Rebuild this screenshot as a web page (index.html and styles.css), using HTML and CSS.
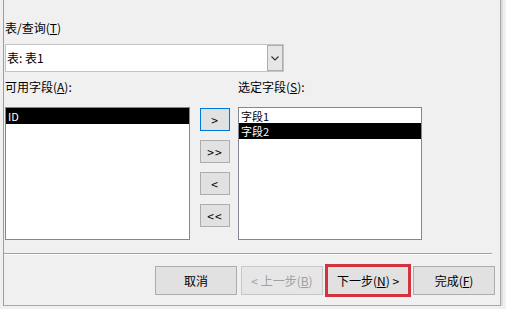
FILE: index.html
```html
<!DOCTYPE html>
<html lang="zh-CN">
<head>
<meta charset="utf-8">
<title>简单查询向导</title>
<link rel="stylesheet" href="styles.css">
</head>
<body>
<div class="dialog">
  <div class="body">
    <div class="label">表/查询(<u>T</u>)</div>
    <div class="combo">
      <span class="combo-text">表: 表1</span>
      <span class="combo-btn"><svg width="8" height="5" viewBox="0 0 8 5"><path d="M0.5 0.5 L4 4 L7.5 0.5" fill="none" stroke="#333" stroke-width="1.2"/></svg></span>
    </div>
    <div class="fields">
      <div class="col col-left">
        <div class="label">可用字段(<u>A</u>):</div>
        <div class="list list-left">
          <div class="row sel">ID</div>
        </div>
      </div>
      <div class="arrows">
        <button class="btn mini default">&gt;</button>
        <button class="btn mini">&gt;&gt;</button>
        <button class="btn mini">&lt;</button>
        <button class="btn mini">&lt;&lt;</button>
      </div>
      <div class="col col-right">
        <div class="label">选定字段(<u>S</u>):</div>
        <div class="list list-right">
          <div class="row">字段1</div>
          <div class="row sel">字段2</div>
        </div>
      </div>
    </div>
  </div>
  <div class="sep"></div>
  <div class="footer">
    <button class="btn big">取消</button>
    <button class="btn big disabled">&lt; 上一步(<u>B</u>)</button>
    <button class="btn big marked">下一步(<u>N</u>) &gt;</button>
    <button class="btn big">完成(<u>F</u>)</button>
  </div>
</div>
</body>
</html>
```

FILE: styles.css
```css
* { box-sizing: border-box; }
html, body {
  margin: 0;
  padding: 0;
  background: #f0f0f0;
}
body {
  width: 506px;
  height: 309px;
  overflow: hidden;
  font-family: "Noto Sans CJK SC", "Noto Sans", sans-serif;
  font-size: 12px;
  color: #000;
}
.dialog {
  margin-left: 3px;
  width: 498px;
  height: 306px;
  border-left: 1px solid #9c9c9c;
  border-right: 1px solid #a8a8a8;
  border-bottom: 1px solid #a8a8a8;
  box-shadow: 2px 0 0 #dcdcdc;
  display: flex;
  flex-direction: column;
}
.body {
  padding: 20px 0 0 1px;
}
.label {
  height: 16px;
  line-height: 16px;
  white-space: nowrap;
}
u { text-decoration: underline; text-underline-offset: 1px; }
.combo {
  margin-top: 8px;
  width: 279px;
  height: 28px;
  background: #fff;
  border: 1px solid #c4c4c4;
  display: flex;
  align-items: center;
  justify-content: space-between;
}
.combo-text {
  padding-left: 1px;
  line-height: 16px;
}
.combo-btn {
  width: 16px;
  height: 26px;
  background: #e6e6e6;
  border: 1px solid #adadad;
  display: flex;
  align-items: center;
  justify-content: center;
}
.fields {
  margin-top: 7px;
  display: flex;
}
.col {
  display: flex;
  flex-direction: column;
}
.col-left { width: 185px; }
.col-right { width: 184px; margin-left: 8px; }
.list {
  margin-top: 12px;
  height: 133px;
  background: #fff;
  border: 1px solid #828790;
}
.row {
  height: 16px;
  line-height: 16px;
  font-size: 11px;
  padding-left: 2px;
  white-space: nowrap;
}
.row.sel {
  background: #000;
  color: #fff;
}
.list-right .row.sel {
  margin-top: -1px;
}
.arrows {
  margin-left: 10px;
  padding-top: 29px;
  width: 30px;
  display: flex;
  flex-direction: column;
  gap: 9px;
}
.btn {
  font-family: inherit;
  font-size: 12px;
  color: #000;
  background: #e1e1e1;
  border: 1px solid #adadad;
  padding: 0;
  margin: 0;
  line-height: 16px;
  white-space: nowrap;
}
.btn.mini {
  width: 30px;
  height: 23px;
  letter-spacing: 1px;
}
.btn.mini.default {
  border: 1px solid #0078d7;
  box-shadow: inset 0 0 0 1px #cce4f7;
}
.sep {
  margin: 13px 8px 0 0;
  height: 2px;
  border-top: 1px solid #a0a0a0;
  border-bottom: 1px solid #fff;
}
.footer {
  padding: 11px 5px 0 0;
  display: flex;
  justify-content: flex-end;
  gap: 4px;
}
.btn.big {
  width: 82px;
  height: 29px;
}
.btn.disabled {
  color: #a0a0a0;
  border-color: #c8c8c8;
  background: #e6e6e6;
}
.btn.marked {
  outline: 3px solid #d3323f;
  outline-offset: -1px;
  border-color: #2a3a5a;
}
```
